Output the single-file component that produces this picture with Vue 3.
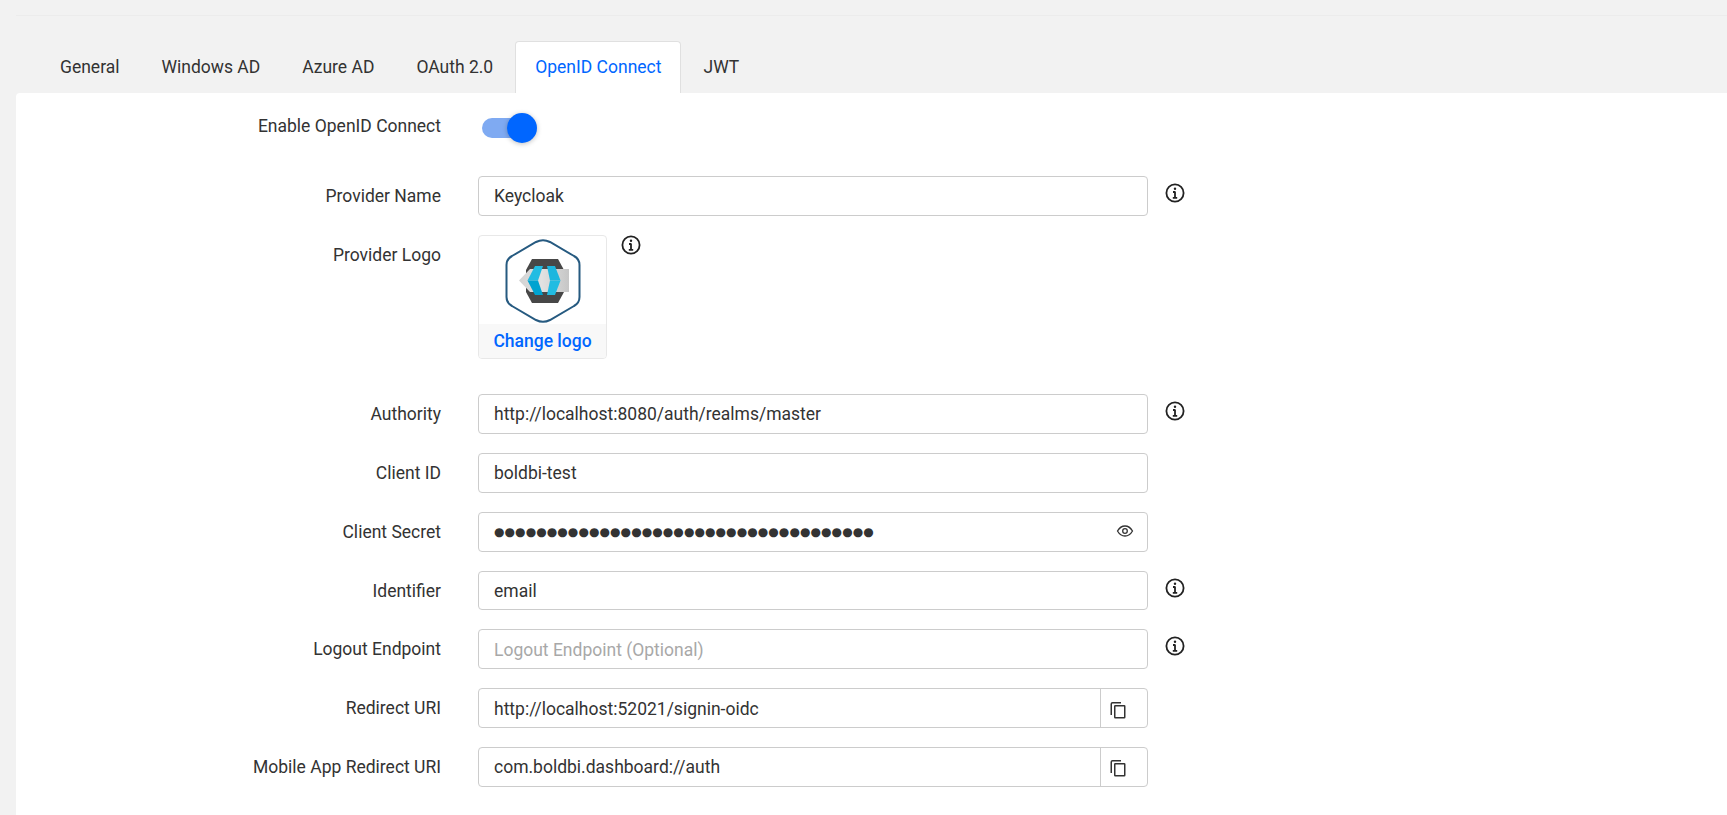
<template>
  <div class="page">
    <div class="top-line"></div>
    <ul class="tabs">
      <li v-for="t in tabs" :key="t" class="tab" :class="{ active: t === 'OpenID Connect' }">{{ t }}</li>
    </ul>
    <div class="card">
      <div class="row toggle-row">
        <label class="label">Enable OpenID Connect</label>
        <div class="toggle">
          <span class="track"></span>
          <span class="knob"></span>
        </div>
      </div>

      <div class="row">
        <label class="label">Provider Name</label>
        <div class="field"><span class="value">Keycloak</span></div>
        <svg class="info" viewBox="0 0 20 20"><circle cx="10" cy="10" r="8.600" /><path d="M10 9v5.500M7.800 14.800h4.400M8 9h2.500" /><circle class="dot" cx="10" cy="5.800" r="1.200" /></svg>
      </div>

      <div class="row logo-row">
        <label class="label">Provider Logo</label>
        <div class="logo-box">
          <div class="logo-img">
            <svg viewBox="0 0 76 84" width="76" height="84">
              <defs>
                <linearGradient id="band" x1="0" y1="0" x2="1" y2="0">
                  <stop offset="0" stop-color="#d2d2d2" />
                  <stop offset="0.45" stop-color="#e2e2e2" />
                  <stop offset="1" stop-color="#c6c6c6" />
                </linearGradient>
              </defs>
              <path d="M31 3 Q38 -0.500 45 3 L69 17 Q74.500 20 74.500 26 L74.500 58 Q74.500 64 69 67 L45 81 Q38 84.500 31 81 L7 67 Q1.500 64 1.500 58 L1.500 26 Q1.500 20 7 17 Z" fill="#fff" stroke="#265a80" stroke-width="2" />
              <path d="M27 20 H53 L59 31 V53 L53 64 H27 L21 53 V31 Z" fill="#474747" />
              <path d="M14 41.500 L25 30 H64 V53 H25 Z" fill="url(#band)" />
              <path d="M30 27 H38 L33 41.500 H22.500 Z" fill="#22bce2" />
              <path d="M22.500 41.500 H33 L38 56 H30 Z" fill="#00a3d0" />
              <path d="M42 27 H50 L55.500 41.500 H45 Z" fill="#1cb6de" />
              <path d="M45 41.500 H55.500 L50 56 H42 Z" fill="#22bce2" />
            </svg>
          </div>
          <div class="logo-foot">Change logo</div>
        </div>
        <svg class="info" viewBox="0 0 20 20"><circle cx="10" cy="10" r="8.600" /><path d="M10 9v5.500M7.800 14.800h4.400M8 9h2.500" /><circle class="dot" cx="10" cy="5.800" r="1.200" /></svg>
      </div>

      <div class="row">
        <label class="label">Authority</label>
        <div class="field"><span class="value">http://localhost:8080/auth/realms/master</span></div>
        <svg class="info" viewBox="0 0 20 20"><circle cx="10" cy="10" r="8.600" /><path d="M10 9v5.500M7.800 14.800h4.400M8 9h2.500" /><circle class="dot" cx="10" cy="5.800" r="1.200" /></svg>
      </div>

      <div class="row">
        <label class="label">Client ID</label>
        <div class="field"><span class="value">boldbi-test</span></div>
      </div>

      <div class="row">
        <label class="label">Client Secret</label>
        <div class="field">
          <span class="value secret">{{ secret }}</span>
          <svg class="eye" viewBox="0 0 18 18"><path d="M1.500 9C3.500 5.500 6 4 9 4s5.500 1.500 7.500 5c-2 3.500-4.500 5-7.500 5S3.500 12.500 1.500 9Z" /><circle cx="9" cy="9" r="2.300" /></svg>
        </div>
      </div>

      <div class="row">
        <label class="label">Identifier</label>
        <div class="field"><span class="value">email</span></div>
        <svg class="info" viewBox="0 0 20 20"><circle cx="10" cy="10" r="8.600" /><path d="M10 9v5.500M7.800 14.800h4.400M8 9h2.500" /><circle class="dot" cx="10" cy="5.800" r="1.200" /></svg>
      </div>

      <div class="row">
        <label class="label">Logout Endpoint</label>
        <div class="field"><span class="value placeholder">Logout Endpoint (Optional)</span></div>
        <svg class="info" viewBox="0 0 20 20"><circle cx="10" cy="10" r="8.600" /><path d="M10 9v5.500M7.800 14.800h4.400M8 9h2.500" /><circle class="dot" cx="10" cy="5.800" r="1.200" /></svg>
      </div>

      <div class="row">
        <label class="label">Redirect URI</label>
        <div class="field">
          <span class="value">http://localhost:52021/signin-oidc</span>
          <span class="copy"><svg viewBox="0 0 16 18"><path d="M11 1.750H2.500A1.250 1.250 0 0 0 1.250 3v11" /><rect x="4.750" y="4.750" width="10" height="12" rx="0.500" /></svg></span>
        </div>
      </div>

      <div class="row">
        <label class="label">Mobile App Redirect URI</label>
        <div class="field">
          <span class="value">com.boldbi.dashboard://auth</span>
          <span class="copy"><svg viewBox="0 0 16 18"><path d="M11 1.750H2.500A1.250 1.250 0 0 0 1.250 3v11" /><rect x="4.750" y="4.750" width="10" height="12" rx="0.500" /></svg></span>
        </div>
      </div>
    </div>
  </div>
</template>

<script setup>
const tabs = ['General', 'Windows AD', 'Azure AD', 'OAuth 2.0', 'OpenID Connect', 'JWT']
const secret = '●'.repeat(36)
</script>

<style>
html, body {
  margin: 0;
  height: 100%;
  background: #f2f2f2;
  overflow: hidden;
}
</style>

<style scoped>
.page {
  height: 815px;
  padding: 15px 0 0 16px;
  box-sizing: border-box;
  font-family: Roboto, "Liberation Sans", sans-serif;
  font-size: 17.5px;
  color: #333;
  display: flex;
  flex-direction: column;
}

.top-line {
  height: 1px;
  background: #ececec;
}

.tabs {
  list-style: none;
  margin: 25px 0 0;
  padding: 0 0 0 23px;
  display: flex;
  height: 52px;
  box-sizing: border-box;
}

.tab {
  padding: 0 20px;
  border: 1px solid transparent;
  border-bottom: none;
  line-height: 50px;
  white-space: nowrap;
}

.tab.active {
  background: #fff;
  color: #0066ff;
  border-color: #e0e0e0;
  border-radius: 4px 4px 0 0;
  padding: 0 19px;
  margin: 0 1px;
}

.card {
  flex: 1;
  background: #fff;
  border-radius: 4px 0 0 0;
  padding-top: 20px;
  display: flex;
  flex-direction: column;
  gap: 19px;
}

.row {
  display: flex;
  align-items: flex-start;
  height: 39.83px;
}

.label {
  width: 425px;
  flex: none;
  text-align: right;
  line-height: 40px;
  margin-right: 37px;
  color: #333;
}

.toggle-row {
  height: 30px;
  margin-bottom: 14px;
}

.toggle-row .label {
  line-height: 26px;
}

.toggle {
  position: relative;
  width: 55px;
  height: 30px;
  margin-left: 4px;
}

.track {
  position: absolute;
  left: 0;
  top: 5px;
  width: 50px;
  height: 20px;
  border-radius: 10px;
  background: #7faaf2;
}

.knob {
  position: absolute;
  right: 0;
  top: 0;
  width: 30px;
  height: 30px;
  border-radius: 50%;
  background: #0066ff;
  box-shadow: 0 1px 5px rgba(0, 0, 0, 0.25);
}

.field {
  width: 670px;
  height: 100%;
  box-sizing: border-box;
  border: 1px solid #ccc;
  border-radius: 4px;
  display: flex;
  align-items: center;
  padding-left: 15px;
  background: #fff;
}

.value {
  flex: 1;
  padding-top: 1px;
  white-space: nowrap;
}

.placeholder {
  color: #a8a8a8;
}

.secret {
  font-size: 12px;
  letter-spacing: 0.08px;
  font-family: "DejaVu Sans", sans-serif;
}

.info {
  width: 20px;
  height: 20px;
  flex: none;
  margin: 7px 0 0 17px;
  fill: none;
  stroke: #222;
  stroke-width: 1.800;
}

.info .dot {
  fill: #222;
  stroke: none;
}

.eye {
  width: 18px;
  height: 18px;
  margin: 0 13px 2px 0;
  fill: none;
  stroke: #333;
  stroke-width: 1.300;
}

.copy {
  width: 47px;
  height: 100%;
  box-sizing: border-box;
  border-left: 1px solid #ccc;
  padding: 3px 0 0 9px;
  display: flex;
  align-items: center;
  flex: none;
}

.copy svg {
  width: 16px;
  height: 18px;
  fill: none;
  stroke: #333;
  stroke-width: 1.500;
}

.logo-row {
  height: 124px;
  margin-bottom: 16.2px;
}

.logo-box {
  width: 129px;
  height: 124px;
  box-sizing: border-box;
  border: 1px solid #e8e8e8;
  border-radius: 4px;
  display: flex;
  flex-direction: column;
  overflow: hidden;
}

.logo-img {
  flex: 1;
  display: flex;
  justify-content: center;
  padding-top: 3px;
}

.logo-foot {
  height: 34px;
  line-height: 35px;
  background: #f8f8f8;
  color: #0066ff;
  text-align: center;
  font-weight: 500;
}

.logo-row .info {
  margin: 0 0 0 14px;
}
</style>
